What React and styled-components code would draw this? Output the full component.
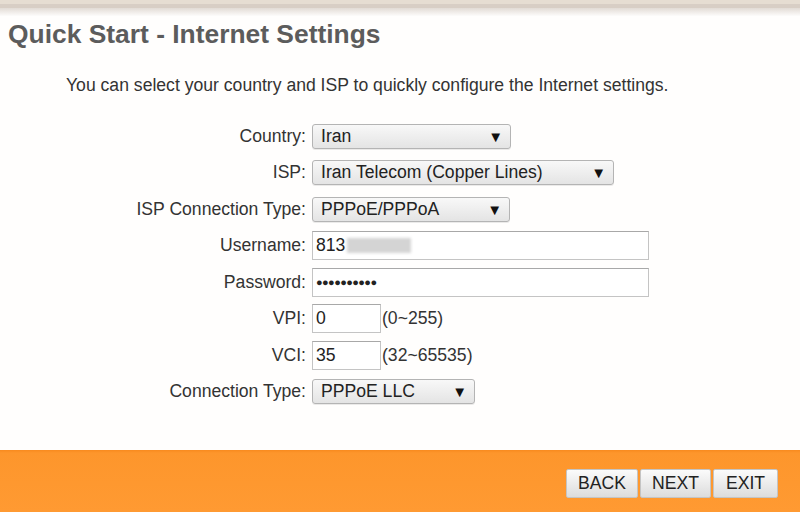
import React from "react";
import styled, { createGlobalStyle } from "styled-components";

const Global = createGlobalStyle`
  html, body {
    margin:0;
    padding:0;
    background:#fff;
  }
  body{
    font-family:"Liberation Sans", Arial, sans-serif;
    color:#333;
  }
`;

/* ---------- PAGE ---------- */

const Page = styled.div`
  width:800px;
  height:512px;
  display:flex;
  flex-direction:column;
  overflow:hidden;
`;

const TopStrip = styled.div`
  height:16px;
  flex:none;
  background:linear-gradient(
    #e6ddd2 0px, #e6ddd2 4px,
    #d8cec5 4px, #d8cec5 8px,
    #e2dbd5 8px, #fdfcfb 16px
  );
`;

const Main = styled.div`
  flex:1;
  background:#fffefd;
`;

const Title = styled.h1`
  margin:3px 0 0 8px;
  font-size:26.4px;
  line-height:30px;
  font-weight:bold;
  color:#5c5c5c;
`;

const Intro = styled.p`
  margin:26px 0 0 66px;
  font-size:17.6px;
  line-height:20px;
  color:#333;
`;

/* ---------- FORM ---------- */

const Form = styled.div`
  margin-top:23px;
  display:grid;
  grid-template-columns:306px 1fr;
  grid-auto-rows:36.5px;
  column-gap:6px;
  align-items:center;
`;

const Label = styled.div`
  text-align:right;
  font-size:17.6px;
  color:#333;
  white-space:nowrap;
`;

const Field = styled.div`
  display:flex;
  align-items:center;
  gap:1px;
  font-size:17.6px;
`;

const Select = styled.div`
  box-sizing:border-box;
  width:${p => p.$w}px;
  height:25px;
  display:flex;
  align-items:center;
  justify-content:space-between;
  padding:0 7px 0 8px;
  border:1px solid #b4b4b4;
  border-radius:3px;
  background:linear-gradient(#f8f8f8, #e4e4e4);
  box-shadow:0 1px 0 rgba(0,0,0,0.08);
  font-size:17.6px;
  color:#222;
`;

const Arrow = styled.span`
  font-size:15px;
  line-height:1;
  color:#111;
`;

const Input = styled.div`
  box-sizing:border-box;
  width:${p => p.$w}px;
  height:29px;
  display:flex;
  align-items:center;
  padding:0 3px;
  border:1px solid #c4c4c4;
  border-top-color:#a8a8a8;
  background:#fff;
  font-size:17.6px;
  color:#222;
`;

const Blur = styled.span`
  display:inline-block;
  width:64px;
  height:15px;
  margin-left:2px;
  background:#d4d4d4;
  filter:blur(1.5px);
`;

const Dots = styled.span`
  font-size:11px;
  letter-spacing:-0.6px;
  font-weight:bold;
  color:#222;
`;

const Hint = styled.span`
  color:#333;
`;

/* ---------- FOOTER ---------- */

const Footer = styled.div`
  height:62px;
  flex:none;
  background:linear-gradient(#f88a1e 0px, #fd962c 3px, #ff9a32 100%);
  display:flex;
  align-items:center;
  justify-content:flex-end;
  gap:2px;
  padding:4px 22px 0 0;
  box-sizing:border-box;
`;

const Button = styled.button`
  box-sizing:border-box;
  width:${p => p.$w}px;
  height:29px;
  padding:0;
  border:1px solid #c4c4c4;
  border-radius:2px;
  background:linear-gradient(#fbfbfb, #dcdcdc);
  font-family:"Liberation Sans", Arial, sans-serif;
  font-size:17.6px;
  color:#222;
  cursor:pointer;
`;

const rows = [
  { label: "Country:", type: "select", value: "Iran", w: 199 },
  { label: "ISP:", type: "select", value: "Iran Telecom (Copper Lines)", w: 302 },
  { label: "ISP Connection Type:", type: "select", value: "PPPoE/PPPoA", w: 198 },
  { label: "Username:", type: "user", w: 337 },
  { label: "Password:", type: "pass", w: 337 },
  { label: "VPI:", type: "num", value: "0", hint: "(0~255)", w: 69 },
  { label: "VCI:", type: "num", value: "35", hint: "(32~65535)", w: 69 },
  { label: "Connection Type:", type: "select", value: "PPPoE LLC", w: 163 },
];

function renderField(r) {
  if (r.type === "select") {
    return (
      <Select $w={r.w}>
        <span>{r.value}</span>
        <Arrow>▼</Arrow>
      </Select>
    );
  }
  if (r.type === "user") {
    return (
      <Input $w={r.w}>
        813<Blur />
      </Input>
    );
  }
  if (r.type === "pass") {
    return (
      <Input $w={r.w}>
        <Dots>●●●●●●●●●●</Dots>
      </Input>
    );
  }
  return (
    <>
      <Input $w={r.w}>{r.value}</Input>
      <Hint>{r.hint}</Hint>
    </>
  );
}

export default function App() {
  return (
    <Page>
      <Global />
      <TopStrip />
      <Main>
        <Title>Quick Start - Internet Settings</Title>
        <Intro>
          You can select your country and ISP to quickly configure the Internet settings.
        </Intro>
        <Form>
          {rows.map(r => (
            <React.Fragment key={r.label}>
              <Label>{r.label}</Label>
              <Field>{renderField(r)}</Field>
            </React.Fragment>
          ))}
        </Form>
      </Main>
      <Footer>
        <Button $w={72}>BACK</Button>
        <Button $w={71}>NEXT</Button>
        <Button $w={65}>EXIT</Button>
      </Footer>
    </Page>
  );
}
